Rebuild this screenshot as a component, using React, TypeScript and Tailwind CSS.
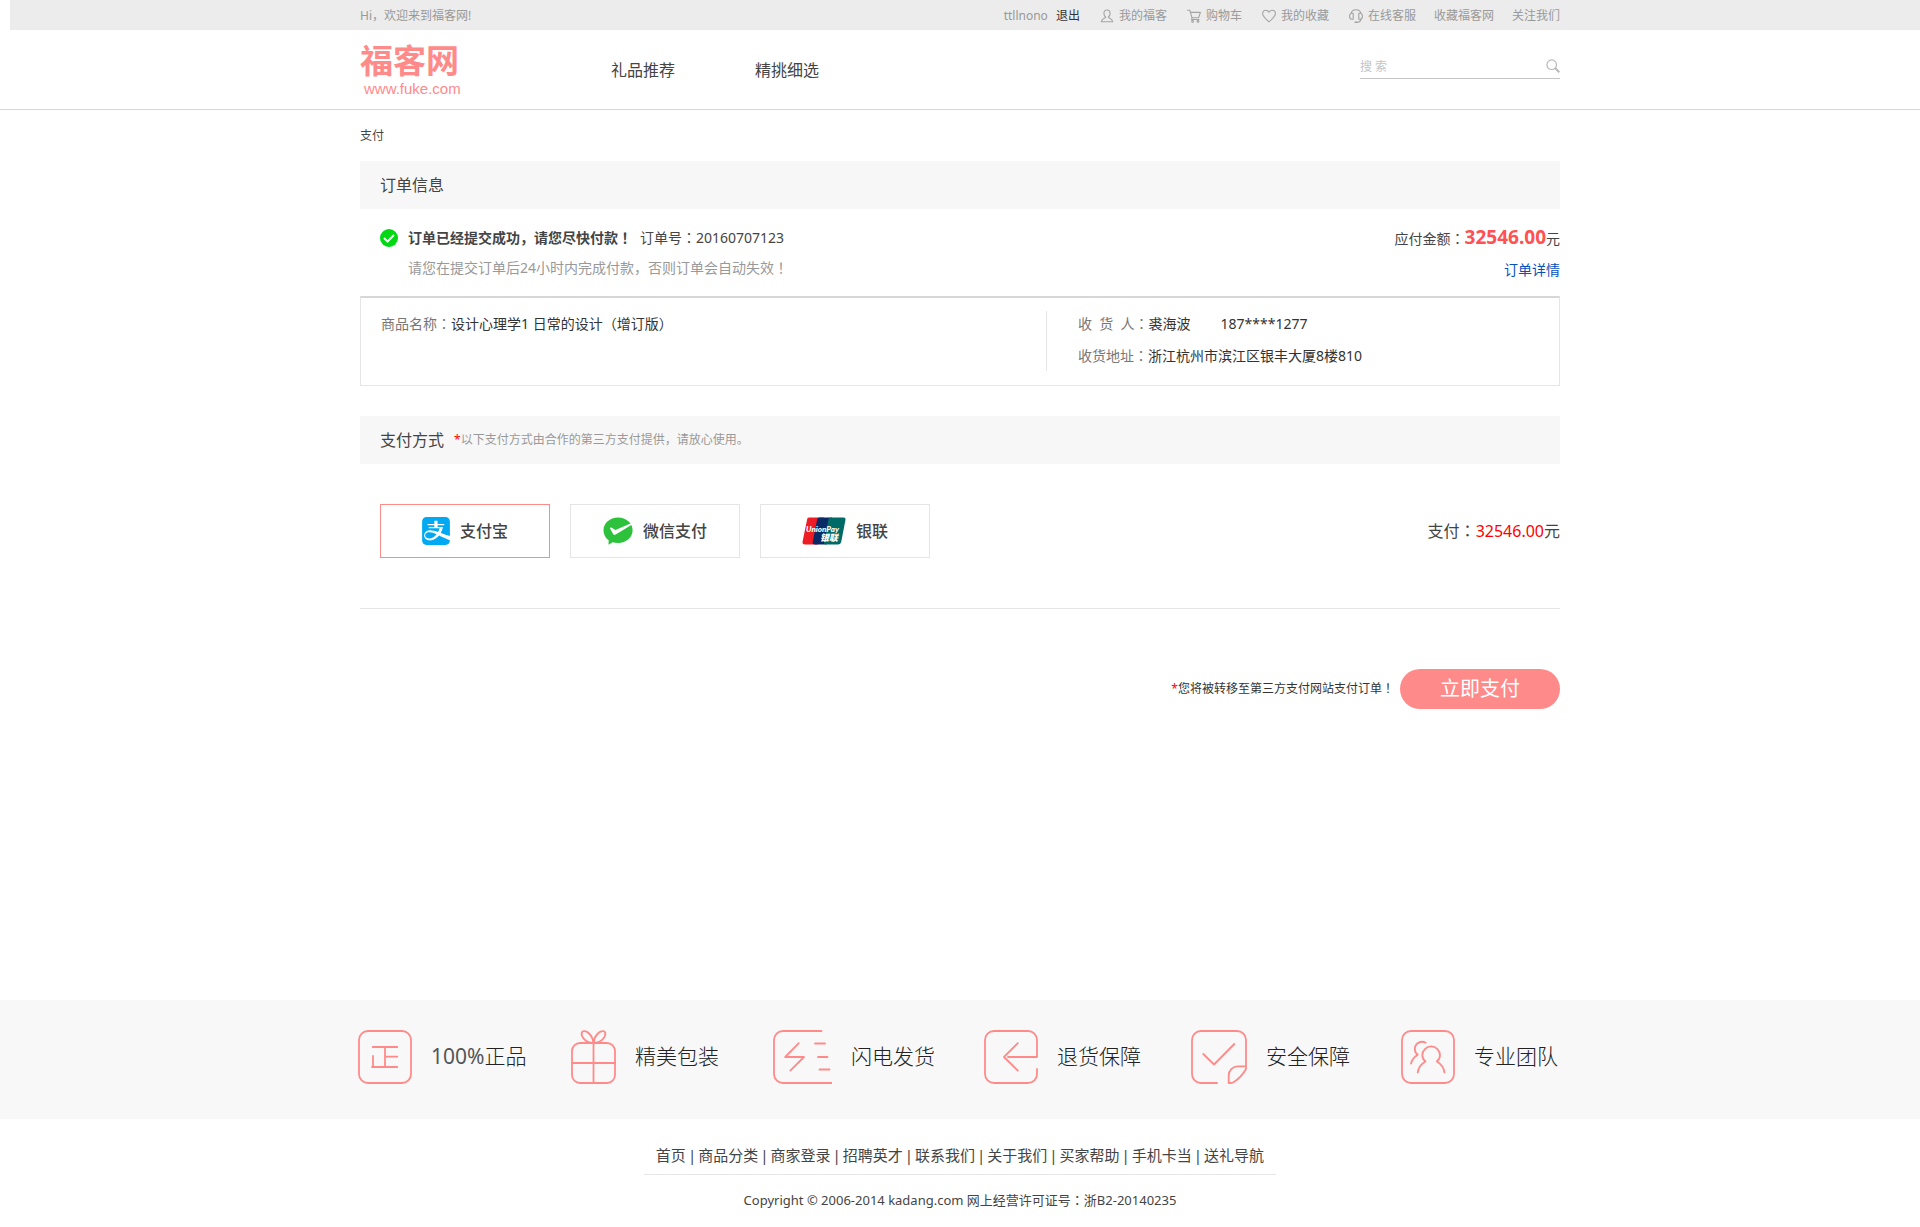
import { useState } from "react";
import type { ReactNode } from "react";
import { SiAlipay } from "react-icons/si";

/* The Japanese forms of these marks sit in the middle of their cell. */
function Colon() {
  return <span lang="ja">：</span>;
}

function Bang() {
  return <span lang="ja">！</span>;
}

/* ---------- top bar icons ---------- */

function TopIcon({ children }: { children: ReactNode }) {
  return (
    <svg
      viewBox="0 0 14 14"
      className="h-3.5 w-3.5 shrink-0"
      fill="none"
      stroke="#a3a3a3"
      strokeWidth="1.1"
      strokeLinejoin="round"
      strokeLinecap="round"
      aria-hidden="true"
    >
      {children}
    </svg>
  );
}

const userIcon = (
  <TopIcon>
    <path d="M5.7 8.2C4.5 7.3 3.9 6 3.9 4.6 3.9 2.4 5.2 1 7 1s3.100 1.400 3.100 3.600c0 1.400-.6 2.700-1.800 3.600M5.700 8.200c0 .8-4.200 1.300-4.400 4.500h11.400c-.2-3.200-4.400-3.700-4.400-4.500" />
  </TopIcon>
);
const cartIcon = (
  <TopIcon>
    <path d="M.6 1.200h2.200L5 8.800h6.600L13.400 3.400H3.500M5 8.800l-.4 1.700h7.300" />
    <circle cx="5.600" cy="12.400" r=".9" />
    <circle cx="11" cy="12.400" r=".9" />
  </TopIcon>
);
const heartIcon = (
  <TopIcon>
    <path d="M7 12.900C4.500 10.700.6 7.700.6 4.600.6 2.700 2 1.200 3.800 1.200 5.200 1.200 6.400 2 7 3.300 7.600 2 8.800 1.200 10.200 1.200c1.800 0 3.200 1.500 3.200 3.400 0 3.100-3.900 6.100-6.400 8.300z" />
  </TopIcon>
);
const headsetIcon = (
  <TopIcon>
    <path d="M2 4.500C2.500 2.100 4.400.7 7 .7s4.500 1.400 5 3.800M4.200 4.300H2.800C1.400 4.300.6 5.500.6 7.300s.8 3 2.200 3h1.400zM9.800 4.300h1.400c1.400 0 2.200 1.200 2.200 3s-.8 3-2.200 3H9.800zM12 10.300c-.4 1.700-1.700 2.800-3.600 2.900" />
    <path d="M6.200 13.200h1.900" strokeWidth="1.600" />
  </TopIcon>
);

const shortcuts = [
  { label: "我的福客", icon: userIcon },
  { label: "购物车", icon: cartIcon },
  { label: "我的收藏", icon: heartIcon },
  { label: "在线客服", icon: headsetIcon },
];

function TopBar() {
  return (
    <div className="bg-linear-to-r from-white from-[10px] to-[#ececec] to-[10px] text-xs text-[#999]">
      <div className="mx-auto flex h-[30px] max-w-[1200px] items-center justify-between pt-0.5">
        <span>Hi，欢迎来到福客网!</span>
        <nav className="flex items-center gap-[18px]" aria-label="快捷导航">
          <div className="flex items-center gap-5">
            <div className="flex items-center gap-2">
              <a href="#account">ttllnono</a>
              <a href="#logout" className="text-[#333]">
                退出
              </a>
            </div>
            {shortcuts.map((s) => (
              <a key={s.label} href="#shortcut" className="flex items-center gap-[5px]">
                {s.icon}
                {s.label}
              </a>
            ))}
          </div>
          <a href="#bookmark">收藏福客网</a>
          <a href="#follow">关注我们</a>
        </nav>
      </div>
    </div>
  );
}

function Header() {
  return (
    <header className="border-b border-[#d7d7d7]">
      <div className="mx-auto flex h-[79px] max-w-[1200px] items-center">
        <a href="#home" className="flex w-[251px] flex-col gap-1 pt-[3px] text-[#ff8a8a]">
          <span className="text-[33px] leading-8 font-bold">福客网</span>
          <span className="pl-1 font-['Liberation_Sans',sans-serif] text-[15px] leading-4">
            www.fuke.com
          </span>
        </a>
        <nav className="flex flex-1 gap-20 text-base text-[#444]" aria-label="主导航">
          <a href="#gifts">礼品推荐</a>
          <a href="#picks">精挑细选</a>
        </nav>
        <form
          className="mb-1 flex w-[200px] items-center border-b border-[#c4c4c4] pb-0.5"
          onSubmit={(e) => e.preventDefault()}
        >
          <input
            type="text"
            aria-label="搜索"
            placeholder="搜 索"
            className="h-5 min-w-0 flex-1 text-xs outline-none placeholder:text-[#c4c4c4]"
          />
          <button type="submit" aria-label="开始搜索">
            <svg viewBox="0 0 14 14" className="h-3.5 w-3.5" fill="none" stroke="#b8b8b8">
              <circle cx="5.700" cy="5.700" r="4.800" strokeWidth="1.200" />
              <path d="M9.300 9.300l4 4" strokeWidth="2" />
            </svg>
          </button>
        </form>
      </div>
    </header>
  );
}

/* ---------- payment logos ---------- */

function AlipayLogo() {
  return <SiAlipay className="h-7 w-7 text-[#00a9f1]" aria-hidden="true" />;
}

function WechatPayLogo() {
  return (
    <svg viewBox="0 0 30 28" className="h-7 w-[30px]" aria-hidden="true">
      <path
        d="M15 .6C23.200.6 29.600 6.200 29.600 13.200S23.200 26 15 26c-1.900 0-3.700-.3-5.300-.8L5.500 27.800l.2-4.500C2.500 21 .5 17.400.5 13.200.5 6.200 6.900.6 15 .6z"
        fill="#2dc13c"
      />
      <path
        d="M7.200 11.800c-.5-1 .6-1.700 1.500-1.100l3.700 2.400 15-6.700.9 1.700-15.600 9.300c-1 .6-2 .5-2.600-.5z"
        fill="#fff"
      />
    </svg>
  );
}

function UnionPayLogo() {
  return (
    <svg viewBox="0 0 44 28" className="h-7 w-11" aria-hidden="true">
      <path d="M7 .5H22L16 27.500H3C1 27.500.2 26.200.6 24.500L5 3C5.300 1.300 5.800.5 7 .5z" fill="#ee1c25" />
      <path d="M17.500.5H30L24.500 27.500H13C11 27.500 10.400 26.200 10.800 24.500L15 3C15.300 1.300 16 .5 17.500.5z" fill="#0a2a66" />
      <path d="M29 .5H41.500C43.300.5 43.800 1.600 43.400 3.300L39.300 24.500C38.900 26.400 37.800 27.500 36 27.500H24C22.300 27.500 21.700 26.200 22.100 24.500L26.300 3C26.700 1.300 27.500.5 29 .5z" fill="#006b66" />
      <text x="4" y="14.500" fill="#fff" fontSize="8" fontWeight="900" fontStyle="italic" fontFamily="Lato, sans-serif">
        UnionPay
      </text>
      <text x="18" y="23.500" fill="#fff" fontSize="9" fontWeight="900" fontStyle="italic" fontFamily="'Noto Sans CJK SC', sans-serif">
        银联
      </text>
    </svg>
  );
}

const methods = [
  { id: "alipay", label: "支付宝", logo: <AlipayLogo /> },
  { id: "wechat", label: "微信支付", logo: <WechatPayLogo /> },
  { id: "unionpay", label: "银联", logo: <UnionPayLogo /> },
];

function OrderSection() {
  return (
    <section>
      <h2 className="flex h-12 items-center bg-[#f7f7f7] px-5 text-base text-[#444]">订单信息</h2>
      <div className="flex justify-between pt-[19px] pb-4 text-sm leading-5 text-[#444]">
        <div className="flex gap-2.5 pl-5">
          <svg viewBox="0 0 18 18" className="mt-px h-[18px] w-[18px]" aria-hidden="true">
            <circle cx="9" cy="9" r="9" fill="#00d814" />
            <path d="M4 9l3.500 3.500L14 6" fill="none" stroke="#fff" strokeWidth="2" />
          </svg>
          <div className="flex flex-col gap-2.5">
            <p className="flex gap-2">
              <strong>
                订单已经提交成功，请您尽快付款
                <Bang />
              </strong>
              <span>
                订单号
                <Colon />
                20160707123
              </span>
            </p>
            <p className="text-[#999]">
              请您在提交订单后24小时内完成付款，否则订单会自动失效
              <Bang />
            </p>
          </div>
        </div>
        <div className="flex flex-col items-end gap-3">
          <p className="flex h-5 items-baseline">
            <span>
              应付金额
              <Colon />
            </span>
            <strong className="text-[19px] leading-none text-[#ff5151]">32546.00</strong>
            <span>元</span>
          </p>
          <a href="#detail" className="text-[#0a50bb]">
            订单详情
          </a>
        </div>
      </div>
      <div className="flex border border-t-2 border-[#e5e5e5] border-t-[#d7d7d7] pt-[13px] pb-3.5 text-sm leading-5 text-[#333]">
        <p className="flex-1 px-5 pt-[3px]">
          <span className="text-[#777]">
            商品名称
            <Colon />
          </span>
          设计心理学1 日常的设计（增订版）
        </p>
        <div className="flex w-[513px] flex-col gap-3 border-l border-[#e5e5e5] pt-[3px] pb-[5px] pl-[31px]">
          <p className="flex">
            <span className="text-[#777]">
              {"收\u00a0\u00a0货\u00a0\u00a0人"}
              <Colon />
            </span>
            <span>裘海波</span>
            <span className="pl-[30px]">187****1277</span>
          </p>
          <p>
            <span className="text-[#777]">
              收货地址
              <Colon />
            </span>
            浙江杭州市滨江区银丰大厦8楼810
          </p>
        </div>
      </div>
    </section>
  );
}

function PaymentSection() {
  const [method, setMethod] = useState("alipay");
  return (
    <section className="mt-[30px]">
      <div className="flex h-12 items-center gap-2.5 bg-[#f7f7f7] px-5">
        <h2 className="text-base text-[#444]">支付方式</h2>
        <p className="text-xs text-[#999]">
          <span className="text-[#f00]">*</span>
          以下支付方式由合作的第三方支付提供，请放心使用。
        </p>
      </div>
      <div className="flex items-center justify-between border-b border-[#e5e5e5] pt-10 pb-[50px] pl-5">
        <div className="flex gap-5" role="radiogroup" aria-label="支付方式">
          {methods.map((m) => (
            <label
              key={m.id}
              className="relative flex h-[54px] w-[170px] cursor-pointer items-center justify-center gap-2.5 border border-[#e5e5e5] text-base font-medium text-[#444] has-checked:border-[#ff8a8a]"
            >
              <input
                type="radio"
                name="method"
                value={m.id}
                checked={method === m.id}
                onChange={() => setMethod(m.id)}
                className="sr-only"
              />
              {m.logo}
              {m.label}
            </label>
          ))}
        </div>
        <p className="text-base text-[#444]">
          支付
          <Colon />
          <span className="text-[#f00]">32546.00</span>元
        </p>
      </div>
      <div className="flex items-center justify-end gap-1.5 py-[60px]">
        <p className="text-xs text-[#333]">
          <span className="text-[#f00]">*</span>
          您将被转移至第三方支付网站支付订单
          <Bang />
        </p>
        <button type="button" className="h-10 w-40 rounded-full bg-[#ff8a8a] text-xl text-white">
          立即支付
        </button>
      </div>
    </section>
  );
}

/* ---------- service promises ---------- */

const promises = [
  {
    label: (
      <span>
        <span className="font-normal text-[#555]">100%</span>正品
      </span>
    ),
    id: "genuine",
    width: 54,
    art: (
      <>
        <rect x="1" y="1" width="52" height="52" rx="9" />
        <path d="M14.700 17h24.600M27 17v20M27 26.700h12.300M15 26v11M14 37h25.300" />
      </>
    ),
  },
  {
    label: "精美包装",
    id: "gift",
    width: 45,
    art: (
      <>
        <rect x="1" y="13" width="43" height="40" rx="8" />
        <path d="M22.500 13v40M1 33h43" />
        <path d="M22.300 12.700C14 13 10 6 10.700 2.700 11.200.5 15 .5 17.600 3c3 3 4.700 6 4.700 9.700zM22.700 12.700C31 13 35 6 34.300 2.700 33.800.5 30 .5 27.400 3c-3 3-4.700 6-4.700 9.700z" />
      </>
    ),
  },
  {
    label: "闪电发货",
    id: "fast",
    width: 59,
    art: (
      <>
        <path d="M48.500 1H10A9 9 0 0 0 1 10V44A9 9 0 0 0 10 53H58.500" />
        <path d="M25.800 13.200L12.200 27H31L17.300 40.600M42 13.500h10M45 27h9.500M46.500 39.500h10" />
      </>
    ),
  },
  {
    label: "退货保障",
    id: "returns",
    width: 54,
    art: (
      <>
        <path d="M53 39v5A9 9 0 0 1 44 53H10A9 9 0 0 1 1 44V10A9 9 0 0 1 10 1H44A9 9 0 0 1 53 10V27H24" />
        <path d="M33.800 13.200L20 27l13.800 13.600" />
      </>
    ),
  },
  {
    label: "安全保障",
    id: "safety",
    width: 56,
    art: (
      <>
        <path d="M26 53H10A9 9 0 0 1 1 44V10A9 9 0 0 1 10 1H46A9 9 0 0 1 55 10V39C52 44.500 46 50 42.500 52.300 41 53.200 39.500 53 37.700 53V45.500A9.200 9.200 0 0 1 47 36.300H55" />
        <path d="M12.300 24L23 34.500 43.300 14" />
      </>
    ),
  },
  {
    label: "专业团队",
    id: "team",
    width: 54,
    art: (
      <>
        <rect x="1" y="1" width="52" height="52" rx="9" />
        <path d="M16.700 42.500C17.500 37.500 20 34 24.500 31.500 22.500 30 21.300 27.600 21.300 25.300a8.850 8.850 0 0 1 17.700 0C39 27.600 37.800 30 35.800 31.500 40.200 34 42.700 37.500 43.500 42.500" />
        <path d="M24.700 12.700C19.500 10 13.800 13.800 13.800 19c0 2.400 1.100 4.400 2.900 5.700C13 27 10.700 30 10 33.700" />
      </>
    ),
  },
];

const footerLinks = [
  "首页",
  "商品分类",
  "商家登录",
  "招聘英才",
  "联系我们",
  "关于我们",
  "买家帮助",
  "手机卡当",
  "送礼导航",
];

function Footer() {
  return (
    <footer>
      <div className="bg-[#f8f8f8]">
        <ul className="mx-auto grid h-[119px] max-w-[1204px] grid-cols-[213fr_202fr_211fr_207fr_210fr_161fr] items-center pb-1.5">
          {promises.map((p) => (
            <li key={p.id} className="flex items-center gap-[19px] text-[21px] font-light whitespace-nowrap text-[#222]">
              <svg
                viewBox={`0 0 ${p.width} 54`}
                width={p.width}
                height="54"
                fill="none"
                stroke="#ff8a8a"
                strokeWidth="1.800"
                strokeLinecap="round"
                strokeLinejoin="round"
                aria-hidden="true"
                className="shrink-0"
              >
                {p.art}
              </svg>
              {p.label}
            </li>
          ))}
        </ul>
      </div>
      <div className="mx-auto flex max-w-[632px] justify-center border-b border-[#e5e5e5] pt-6 pb-[7px]">
        <nav className="flex text-[15px] leading-6 whitespace-nowrap text-[#444]" aria-label="页脚导航">
          {footerLinks.map((label, i) => (
            <span key={label} className="flex">
              {i > 0 && <span className="px-0.5">|</span>}
              <a href="#footer">{label}</a>
            </span>
          ))}
        </nav>
      </div>
      <p className="pt-[15px] pb-[17px] text-center text-[13px] leading-5 text-[#444]">
        Copyright © 2006-2014 kadang.com 网上经营许可证号
        <Colon />浙B2-20140235
      </p>
    </footer>
  );
}

export default function App() {
  return (
    <div
      lang="zh-CN"
      className="flex min-h-screen flex-col bg-white font-['Noto_Sans','Noto_Sans_CJK_SC',sans-serif]"
    >
      <TopBar />
      <Header />
      <main className="mx-auto w-full max-w-[1200px] flex-1">
        <p className="pt-4 pb-[15px] text-xs leading-5 text-[#444]">支付</p>
        <OrderSection />
        <PaymentSection />
      </main>
      <Footer />
    </div>
  );
}
